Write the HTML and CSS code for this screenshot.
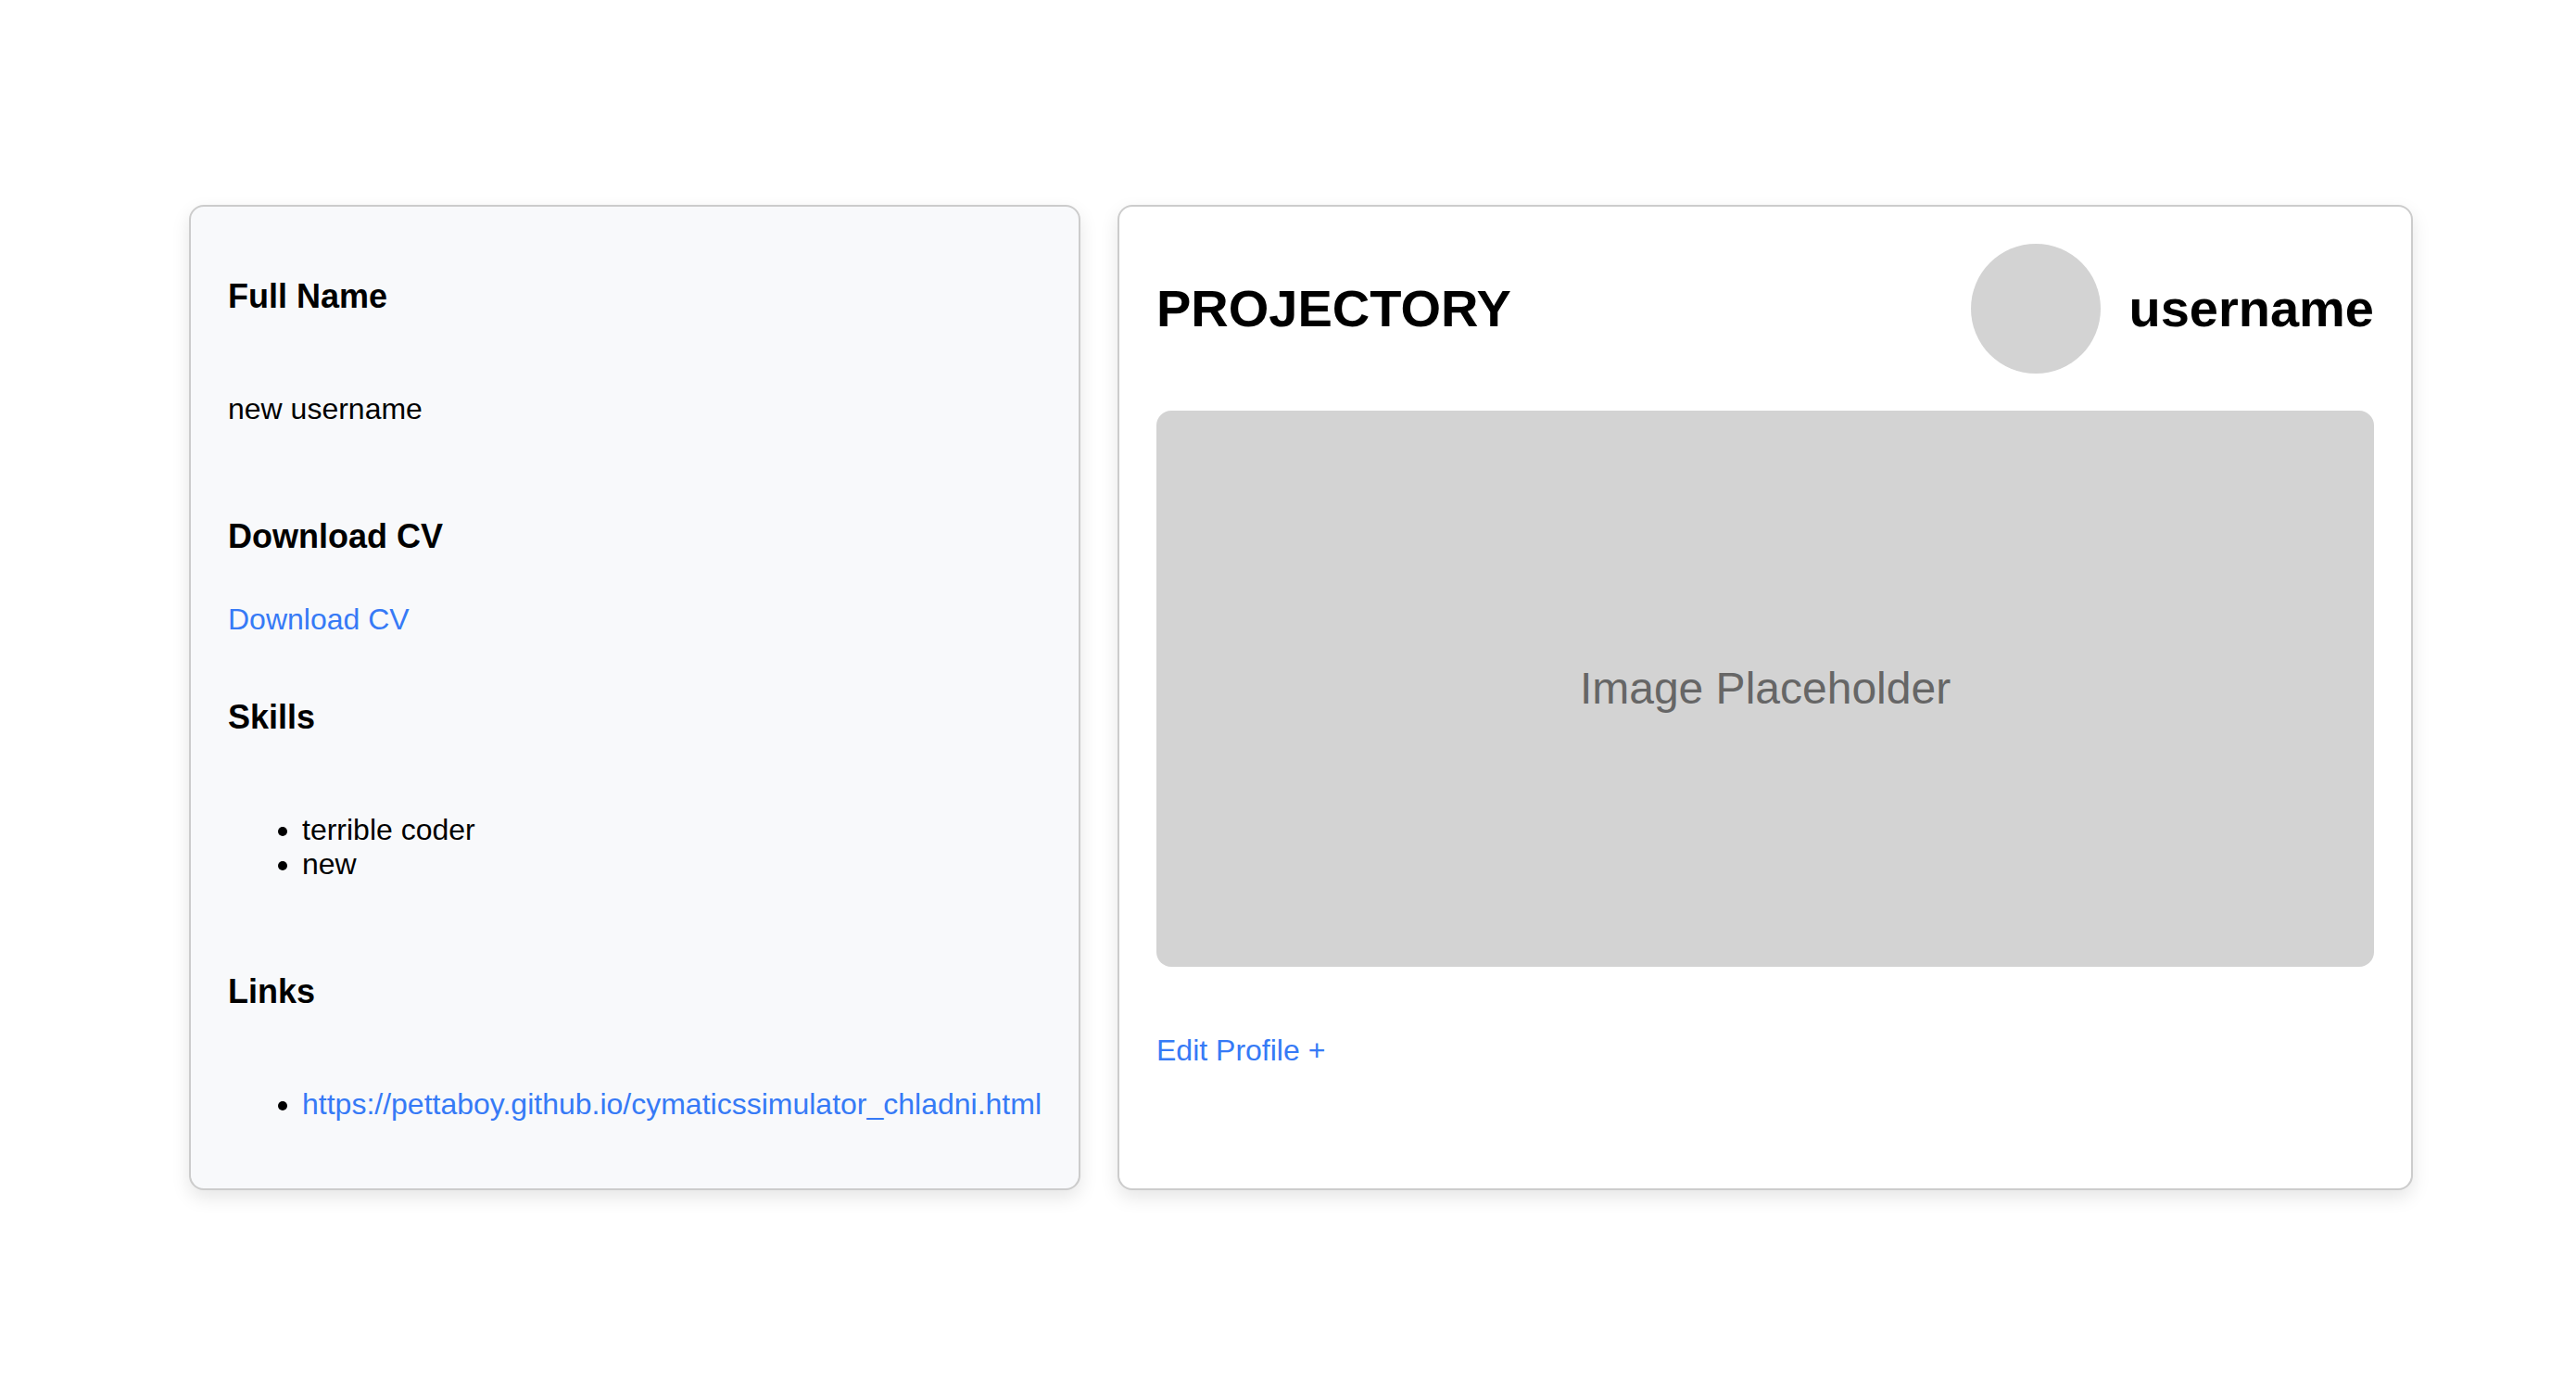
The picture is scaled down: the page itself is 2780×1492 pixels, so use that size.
FILE: index.html
```html
<!DOCTYPE html>
<html lang="en">
<head>
  <meta charset="utf-8">
  <meta name="viewport" content="width=device-width, initial-scale=1">
  <title>Projectory</title>
  <link rel="stylesheet" href="styles.css">
</head>
<body>
  <div class="profile">
    <aside class="card sidebar">
      <section class="section">
        <h3 class="section-title">Full Name</h3>
        <p class="section-text">new username</p>
      </section>
      <section class="section">
        <h3 class="section-title">Download CV</h3>
        <a class="link" href="#cv">Download CV</a>
      </section>
      <section class="section">
        <h3 class="section-title">Skills</h3>
        <ul class="section-list">
          <li>terrible coder</li>
          <li>new</li>
        </ul>
      </section>
      <section class="section">
        <h3 class="section-title">Links</h3>
        <ul class="section-list">
          <li><a class="link" href="https://pettaboy.github.io/cymaticssimulator_chladni.html">https://pettaboy.github.io/cymaticssimulator_chladni.html</a></li>
        </ul>
      </section>
    </aside>
    <main class="card main">
      <header class="header">
        <h1 class="heading">PROJECTORY</h1>
        <div class="user">
          <div class="avatar"></div>
          <h2 class="heading">username</h2>
        </div>
      </header>
      <div class="placeholder">Image Placeholder</div>
      <p class="section-text"><a class="link" href="#edit">Edit Profile +</a></p>
    </main>
  </div>
</body>
</html>
```
FILE: styles.css
```css
* {
  box-sizing: border-box;
}

body {
  margin: 0;
  padding: 221px 176px 208px 204px;
  background: #fff;
  color: #000;
  font-family: "Liberation Sans", Arial, sans-serif;
  font-size: 32px;
  line-height: 37px;
}

.profile {
  display: grid;
  grid-template-columns: max-content minmax(0, 1fr);
  gap: 40px;
}

.card {
  padding: 40px;
  background: #fff;
  border: 2px solid #ccc;
  border-radius: 16px;
  box-shadow: 0 8px 20px rgba(0, 0, 0, 0.1);
}

.sidebar {
  background: #f8f9fb;
}

.main {
  display: flex;
  flex-direction: column;
  gap: 40px;
}

.section {
  display: flex;
  flex-direction: column;
  align-items: flex-start;
  margin-bottom: 30px;
}

.section:last-child {
  margin-bottom: 0;
}

.section-title {
  margin: 36px 0 51px;
  font-size: 36px;
  line-height: 41px;
}

.section-text {
  margin: 32px 0;
}

.section-list {
  margin: 32px 0;
  padding-left: 80px;
}

.link {
  color: #367af6;
  text-decoration: none;
}

.header {
  display: flex;
  align-items: center;
  justify-content: space-between;
}

.user {
  display: flex;
  align-items: center;
  gap: 30px;
}

.avatar {
  width: 140px;
  height: 140px;
  background: #d3d3d3;
  border-radius: 50%;
}

.heading {
  margin: 0;
  font-size: 56px;
  line-height: 64px;
}

.placeholder {
  display: flex;
  align-items: center;
  justify-content: center;
  height: 600px;
  background: #d3d3d3;
  border-radius: 16px;
  color: #666;
  font-size: 48px;
  line-height: 56px;
}
```
